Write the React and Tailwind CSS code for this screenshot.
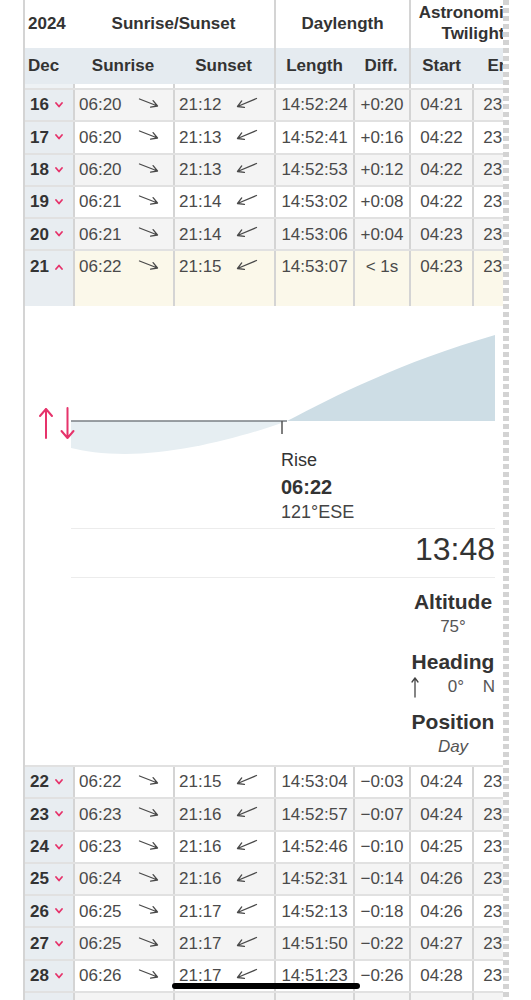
const COLS = 'grid grid-cols-[48px_100px_101px_79px_56px_63px_63px] w-[510px]'
const LINE = 'border-l-2 border-[#d4d4d4]'
const RED = '#e6336b'

const before = [
  { d: 16, rise: '06:20', set: '21:12', len: '14:52:24', diff: '+0:20', start: '04:21', end: '23:26', bg: 'bg-[#f4f4f4]' },
  { d: 17, rise: '06:20', set: '21:13', len: '14:52:41', diff: '+0:16', start: '04:22', end: '23:26', bg: 'bg-white' },
  { d: 18, rise: '06:20', set: '21:13', len: '14:52:53', diff: '+0:12', start: '04:22', end: '23:27', bg: 'bg-[#f4f4f4]' },
  { d: 19, rise: '06:21', set: '21:14', len: '14:53:02', diff: '+0:08', start: '04:22', end: '23:27', bg: 'bg-white' },
  { d: 20, rise: '06:21', set: '21:14', len: '14:53:06', diff: '+0:04', start: '04:23', end: '23:28', bg: 'bg-[#f4f4f4]' },
]

const today = { d: 21, rise: '06:22', set: '21:15', len: '14:53:07', diff: '< 1s', start: '04:23', end: '23:28', bg: 'bg-[#fbf8ea]', open: true }

const after = [
  { d: 22, rise: '06:22', set: '21:15', len: '14:53:04', diff: '−0:03', start: '04:24', end: '23:28', bg: 'bg-white' },
  { d: 23, rise: '06:23', set: '21:16', len: '14:52:57', diff: '−0:07', start: '04:24', end: '23:29', bg: 'bg-[#f4f4f4]' },
  { d: 24, rise: '06:23', set: '21:16', len: '14:52:46', diff: '−0:10', start: '04:25', end: '23:29', bg: 'bg-white' },
  { d: 25, rise: '06:24', set: '21:16', len: '14:52:31', diff: '−0:14', start: '04:26', end: '23:29', bg: 'bg-[#f4f4f4]' },
  { d: 26, rise: '06:25', set: '21:17', len: '14:52:13', diff: '−0:18', start: '04:26', end: '23:30', bg: 'bg-white' },
  { d: 27, rise: '06:25', set: '21:17', len: '14:51:50', diff: '−0:22', start: '04:27', end: '23:30', bg: 'bg-[#f4f4f4]' },
  { d: 28, rise: '06:26', set: '21:17', len: '14:51:23', diff: '−0:26', start: '04:28', end: '23:30', bg: 'bg-white' },
  { d: 29, rise: '06:26', set: '21:17', len: '14:50:52', diff: '−0:30', start: '04:28', end: '23:30', bg: 'bg-[#f4f4f4]' },
]

// thin slanted arrows, shaft + two short barbs
function RiseArrow() {
  return (
    <svg width="22" height="16" viewBox="0 0 22 16" fill="none" stroke="#4a4a4a" strokeWidth="1.3" strokeLinecap="round" strokeLinejoin="round">
      <path d="M1.5 2 L19.5 9 M12.6 10.1 L19.5 9 L15.1 3.6" />
    </svg>
  )
}

function SetArrow() {
  return (
    <svg width="22" height="16" viewBox="0 0 22 16" fill="none" stroke="#4a4a4a" strokeWidth="1.3" strokeLinecap="round" strokeLinejoin="round">
      <path d="M20.5 1.5 L1.5 9.5 M8.4 10.4 L1.5 9.5 L5.7 3.9" />
    </svg>
  )
}

function Chevron({ up }) {
  return (
    <svg width="8" height="6" viewBox="0 0 8 6" fill="none" stroke={RED} strokeWidth="1.8" strokeLinecap="round" strokeLinejoin="round" className="ml-[6px]">
      {up ? <polyline points="1,5 4,1.5 7,5" /> : <polyline points="1,1 4,4.5 7,1" />}
    </svg>
  )
}

function Cell({ className = '', children }) {
  return <div className={`h-[30.3px] flex items-center ${className}`}>{children}</div>
}

function Row({ r }) {
  return (
    <div className={`${COLS} ${r.open ? 'h-[56.5px]' : 'h-[32.3px]'} border-t-2 border-[#e1e1e1] ${r.bg} text-[17px] text-[#4a4a4a]`}>
      <div className="bg-[#e8edf1]">
        <Cell className="pl-[5px] font-bold text-[#333]">
          {r.d}
          <Chevron up={r.open} />
        </Cell>
      </div>
      <div className={LINE}>
        <Cell className="pl-[4px]">
          <span className="w-[59px]">{r.rise}</span>
          <RiseArrow />
        </Cell>
      </div>
      <div className={LINE}>
        <Cell className="pl-[4px]">
          <span className="w-[57px]">{r.set}</span>
          <SetArrow />
        </Cell>
      </div>
      <div className={LINE}><Cell className="justify-center">{r.len}</Cell></div>
      <div className={LINE}><Cell className="justify-center">{r.diff}</Cell></div>
      <div className={LINE}><Cell className="justify-center">{r.start}</Cell></div>
      <div className={LINE}><Cell className="justify-center">{r.end}</Cell></div>
    </div>
  )
}

function SunChart() {
  return (
    <svg width="424" height="128" viewBox="0 0 424 128" className="block overflow-visible">
      <path d="M0 101 L216 101 C175 116 110 134 54 134 C32 134 12 131 0 128 Z" fill="#e6eef2" />
      <path d="M216 101 C262 77 330 42 424 15 L424 101 Z" fill="#cddde5" />
      <path d="M0 101 H216" stroke="#7a7f84" strokeWidth="1.5" />
      <path d="M211 101 V114" stroke="#555" strokeWidth="1.5" />
    </svg>
  )
}

function Details() {
  return (
    <div className="relative h-[459px] bg-white pl-[46px] pr-[8px] pt-[14px] text-[#333]">
      <svg width="38" height="36" viewBox="0 0 38 36" fill="none" stroke={RED} strokeWidth="2" strokeLinecap="round" strokeLinejoin="round" className="absolute left-[13px] top-[100px]">
        <path d="M8 3 V32 M2 10 L8 3 L14 10" />
        <path d="M29.5 2 V32 M23.5 25 L29.5 32 L35.5 25" />
      </svg>

      <SunChart />

      <div className="ml-[210px]">
        <div className="text-[18px] leading-[24px]">Rise</div>
        <div className="mt-[2px] text-[20px] leading-[26px] font-bold">06:22</div>
        <div className="text-[18px] leading-[24px] text-[#444]">121°ESE</div>
      </div>

      <div className="mt-[4px] h-px bg-[#ececec]" />
      <div className="text-right text-[32px] leading-[40px]">13:48</div>
      <div className="mt-[8px] h-px bg-[#ececec]" />

      <div className="ml-auto w-[84px] text-center">
        <div className="mt-[10px] text-[21px] leading-[28px] font-bold">Altitude</div>
        <div className="text-[17px] leading-[22px] text-[#555]">75°</div>
        <div className="mt-[10px] text-[21px] leading-[28px] font-bold">Heading</div>
        <div className="flex items-center justify-between h-[22px] text-[17px] text-[#555]">
          <svg width="8" height="22" viewBox="0 0 8 22" fill="none" stroke="#444" strokeWidth="1.3" strokeLinecap="round" strokeLinejoin="round">
            <path d="M4 2 V21 M1 6 L4 2 L7 6" />
          </svg>
          <span className="ml-[10px]">0°</span>
          <span>N</span>
        </div>
        <div className="mt-[10px] text-[21px] leading-[28px] font-bold">Position</div>
        <div className="text-[17px] leading-[22px] italic text-[#555]">Day</div>
      </div>
    </div>
  )
}

export default function App() {
  return (
    <div className="relative flex w-[531px] min-h-[1000px] bg-white font-['Liberation_Sans',Arial,sans-serif] overflow-hidden">
      <div className="w-[23px] shrink-0" />

      <div className="w-[480px] shrink-0 border-l-2 border-[#d4d4d4] overflow-hidden">
        {/* header */}
        <div className={`${COLS} h-[48px] bg-white text-[17px] font-bold text-[#333]`}>
          <div className="pl-[3px] flex items-center">2024</div>
          <div className="col-span-2 flex items-center justify-center">Sunrise/Sunset</div>
          <div className={`col-span-2 ${LINE} flex items-center justify-center`}>Daylength</div>
          <div className={`col-span-2 ${LINE} pt-[2px] text-center leading-[21px]`}>
            Astronomical<br />Twilight
          </div>
        </div>
        <div className={`${COLS} h-[36px] bg-[#e5ebf0] text-[17px] font-bold text-[#333]`}>
          <div className="pl-[3px] flex items-center">Dec</div>
          <div className="flex items-center justify-center">Sunrise</div>
          <div className="flex items-center justify-center">Sunset</div>
          <div className={`${LINE} flex items-center justify-center`}>Length</div>
          <div className="flex items-center justify-center">Diff.</div>
          <div className={`${LINE} flex items-center justify-center`}>Start</div>
          <div className="flex items-center justify-center">End</div>
        </div>
        <div className={`${COLS} h-[4px] bg-white`}>
          <div className="bg-[#eef2f5]" />
          <div className={LINE} />
          <div className={LINE} />
          <div className={LINE} />
          <div className={LINE} />
          <div className={LINE} />
          <div className={LINE} />
        </div>

        {before.map(r => <Row key={r.d} r={r} />)}
        <Row r={today} />
        <Details />
        {after.map(r => <Row key={r.d} r={r} />)}
      </div>

      <div className="w-[6px] shrink-0 bg-[repeating-linear-gradient(to_bottom,#d3d3d3_0px,#d3d3d3_5px,transparent_5px,transparent_8px)]" />

      <div className="fixed left-[172px] bottom-[11px] w-[188px] h-[6px] rounded-full bg-black" />
    </div>
  )
}
